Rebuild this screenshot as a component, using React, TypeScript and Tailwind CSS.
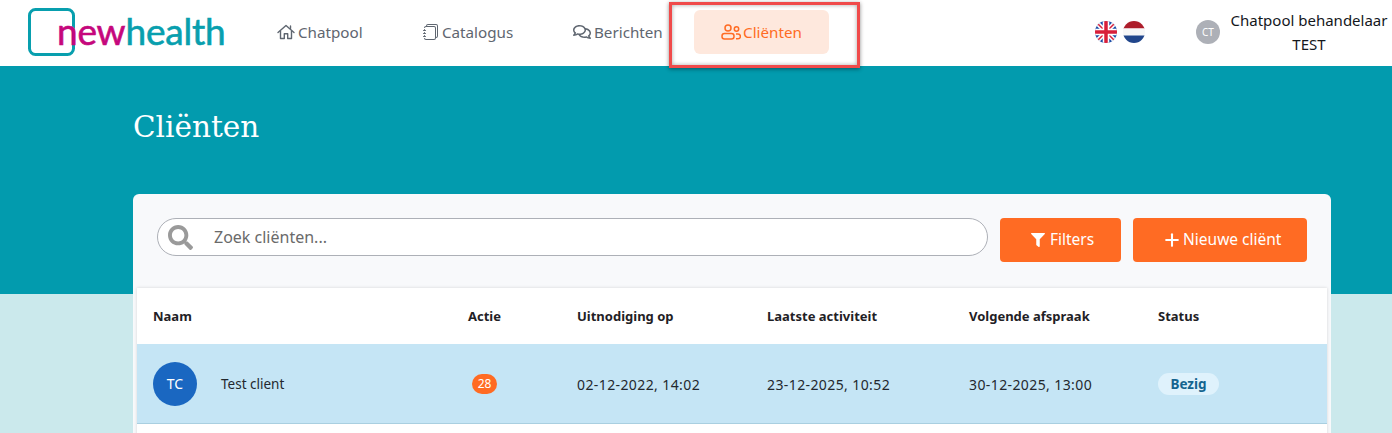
import { FaFilter, FaRegComments, FaSearch } from "react-icons/fa";
import { BsJournals } from "react-icons/bs";
import { LuPlus } from "react-icons/lu";

const sans = "font-['Noto_Sans',sans-serif]";

function Logo() {
  return (
    <div className="relative w-[197px] h-[48px]">
      <svg width="48" height="48" viewBox="0 0 48 48" fill="none">
        <rect x="1.5" y="1.5" width="44" height="45" rx="6" stroke="#089fae" strokeWidth="3" />
      </svg>
      <div className="absolute left-[29px] top-[1px] text-[37px] leading-[44px] font-['Lato',sans-serif] tracking-[-0.2px] whitespace-nowrap [-webkit-text-stroke:0.6px]">
        <span className="text-[#c5077c]">new</span>
        <span className="text-[#089fae]">health</span>
      </div>
    </div>
  );
}

function FlagUk() {
  return (
    <svg width="22" height="22" viewBox="0 0 22 22">
      <defs>
        <clipPath id="uk">
          <circle cx="11" cy="11" r="11" />
        </clipPath>
      </defs>
      <g clipPath="url(#uk)">
        <rect width="22" height="22" fill="#1f4fa8" />
        <path d="M0 0 22 22M22 0 0 22" stroke="#fff" strokeWidth="4.5" />
        <path d="M0 0 22 22M22 0 0 22" stroke="#d81f3a" strokeWidth="1.5" />
        <path d="M11 0V22M0 11H22" stroke="#fff" strokeWidth="6.5" />
        <path d="M11 0V22M0 11H22" stroke="#d81f3a" strokeWidth="3.5" />
      </g>
    </svg>
  );
}

function FlagNl() {
  return (
    <svg width="22" height="22" viewBox="0 0 22 22">
      <defs>
        <clipPath id="nl">
          <circle cx="11" cy="11" r="11" />
        </clipPath>
      </defs>
      <g clipPath="url(#nl)">
        <rect width="22" height="7.5" fill="#ad1d2b" />
        <rect y="7.5" width="22" height="7" fill="#f7f7f7" />
        <rect y="14.5" width="22" height="7.5" fill="#21468b" />
      </g>
    </svg>
  );
}

function HomeIcon() {
  return (
    <svg width="18" height="18" viewBox="0 0 18 18" fill="none" stroke="currentColor" strokeWidth="1.4" strokeLinejoin="round" strokeLinecap="round">
      <path d="M1 9.5 9 2.5l8 7" />
      <path d="M13.5 5.5V3" />
      <path d="M3.5 8v7.5h3.8v-4.7h3.4v4.7h3.8V8" />
    </svg>
  );
}

function UsersIcon() {
  return (
    <svg width="20" height="16" viewBox="0 0 20 16" fill="none" stroke="currentColor" strokeWidth="1.5">
      <circle cx="7" cy="4" r="3" />
      <rect x="1" y="9.5" width="12" height="5.5" rx="2.5" />
      <circle cx="15.5" cy="5" r="2.2" />
      <path d="M15 10h2a2.2 2.2 0 0 1 0 4.8h-2" />
    </svg>
  );
}

const navItems = [
  { label: "Chatpool", icon: <HomeIcon />, width: "w-[146px]" },
  { label: "Catalogus", icon: <BsJournals size={16} />, width: "w-[150px]" },
  { label: "Berichten", icon: <FaRegComments size={18} />, width: "w-[149px]" },
];

const columns = ["Naam", "Actie", "Uitnodiging op", "Laatste activiteit", "Volgende afspraak", "Status"];
const rowGrid = "grid grid-cols-[315px_109px_190px_202px_189px_1fr] items-center pl-4";
const dateCell = "pt-[2px] text-[14px] tracking-[0.4px]";

export default function App() {
  return (
    <div className={`${sans} relative h-[433px] overflow-hidden bg-[#cbe9ec]`}>
      <header className="h-[66px] bg-white flex items-center pl-7 pb-[2px]">
        <Logo />
        <nav className="flex items-center ml-6 text-[15.2px] text-[#5f6670]">
          {navItems.map((item) => (
            <a key={item.label} className={`${item.width} flex items-center gap-[3px] pl-7`}>
              {item.icon}
              <span>{item.label}</span>
            </a>
          ))}
          <a className="w-[135px] h-11 rounded-md bg-[#fee8dd] text-[#ff6b23] flex items-center justify-center gap-[2px]">
            <UsersIcon />
            <span>Cliënten</span>
          </a>
        </nav>
        <div className="ml-[266px] flex items-center gap-[6px]">
          <FlagUk />
          <FlagNl />
        </div>
        <div className="ml-[51px] w-6 h-6 rounded-full bg-[#adb0b7] text-white text-[10px] flex items-center justify-center">
          CT
        </div>
        <div className="ml-[10px] w-[158px] text-center text-[15px] leading-6 text-[#14171c]">
          Chatpool behandelaar TEST
        </div>
      </header>

      <div className="absolute left-[669px] top-[2px] w-[191px] h-[66px] border-[3px] border-[#f04a4a] shadow-[0_1px_4px_rgba(0,0,0,0.45),inset_0_0_4px_rgba(0,0,0,0.35)]" />

      <section className="h-[228px] bg-[#029bae] px-[133px] pt-[38px]">
        <h1 className="font-['DejaVu_Serif',serif] text-[29.5px] leading-[46px] text-white">Cliënten</h1>
      </section>

      <main className="-mt-[100px] ml-[133px] mr-[61px] rounded-t-md bg-[#f8f9fb] px-1">
        <div className="flex items-start px-5 pt-6 pb-[26px] gap-3">
          <div className="flex-1 h-[38px] rounded-full border border-[#adb0b7] bg-white flex items-center pl-[10px]">
            <FaSearch size={25} className="text-[#9a9a9a]" />
            <span className="ml-[21px] text-[16px] text-[#6a6a6a]">Zoek cliënten...</span>
          </div>
          <button className="w-[121px] h-11 pl-1 rounded bg-[#ff6b23] text-white text-[15.5px] flex items-center justify-center gap-[5px]">
            <FaFilter size={14} />
            Filters
          </button>
          <button className="w-[174px] h-11 pl-[3px] rounded bg-[#ff6b23] text-white text-[15.5px] flex items-center justify-center gap-[1.5px]">
            <LuPlus size={20} strokeWidth={2.5} />
            Nieuwe cliënt
          </button>
        </div>

        <div className="bg-white shadow-[0_0_3px_rgba(0,0,0,0.15)] h-[200px]">
          <div className={`${rowGrid} h-14 pt-[2px] text-[13px] font-bold text-[#1f2125]`}>
            {columns.map((c) => (
              <div key={c}>{c}</div>
            ))}
          </div>
          <div className={`${rowGrid} h-20 bg-[#c5e5f5] border-b border-[#a9cfe0] text-[13.5px] text-[#23282e]`}>
            <div className="flex items-center">
              <div className="w-11 h-11 rounded-full bg-[#1a67c1] text-white text-[14px] flex items-center justify-center">
                TC
              </div>
              <span className="ml-6 pt-[2px]">Test client</span>
            </div>
            <div className="pl-1">
              <span className="inline-flex w-[25px] h-5 rounded-full bg-[#ff6b23] text-white text-[12px] items-center justify-center">
                28
              </span>
            </div>
            <div className={dateCell}>02-12-2022, 14:02</div>
            <div className={dateCell}>23-12-2025, 10:52</div>
            <div className={dateCell}>30-12-2025, 13:00</div>
            <div>
              <span className="inline-flex h-[22px] w-[61px] pt-px rounded-full bg-[#dff2fc] text-[#14648f] text-[13.5px] font-bold items-center justify-center">
                Bezig
              </span>
            </div>
          </div>
        </div>
      </main>
    </div>
  );
}
